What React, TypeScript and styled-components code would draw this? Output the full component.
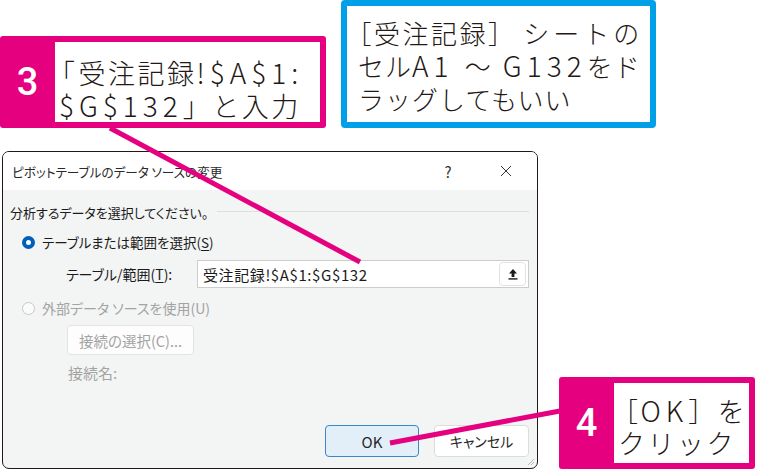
import React from "react";
import styled, { createGlobalStyle } from "styled-components";

const PINK = "#e4007f";
const BLUE = "#00a0e9";
const INK = "#231815";

const GlobalStyle = createGlobalStyle`
  html, body { margin: 0; padding: 0; background: #fff; }
  body {
    width: 783px;
    height: 471px;
    overflow: hidden;
    font-family: "Noto Sans CJK JP", "Noto Sans", sans-serif;
  }
`;

const Stage = styled.div`
  position: relative;
  width: 783px;
  height: 471px;
  display: flex;
  flex-direction: column;
`;

const TopRow = styled.div`
  display: flex;
  align-items: flex-end;
  gap: 15px;
  height: 128px;
`;

const StepCallout = styled.div<{ $w: number; $h: number }>`
  display: flex;
  box-sizing: border-box;
  width: ${(p) => p.$w}px;
  height: ${(p) => p.$h}px;
  background: ${PINK};
  padding: 6px 6px 6px 0;
  border-radius: 3px;
  flex: none;
`;

const StepNumber = styled.div`
  width: 55px;
  flex: none;
  display: flex;
  align-items: center;
  justify-content: center;
  color: #fff;
  font-family: Roboto, "Noto Sans", sans-serif;
  font-weight: 500;
  font-size: 38px;
  line-height: 1;
`;

const CalloutText = styled.div<{ $pt: number; $pl: number }>`
  flex: 1;
  background: #fff;
  color: ${INK};
  font-size: 27px;
  font-weight: 300;
  line-height: 32px;
  padding: ${(p) => p.$pt}px 0 0 ${(p) => p.$pl}px;
  white-space: nowrap;
  letter-spacing: 2.5px;
`;

const NoteCallout = styled.div`
  box-sizing: border-box;
  width: 315px;
  height: 128px;
  border: 6px solid ${BLUE};
  border-radius: 4px;
  background: #fff;
  color: ${INK};
  font-size: 26px;
  font-weight: 300;
  line-height: 33px;
  padding: 10px 0 0 11px;
  white-space: nowrap;
  letter-spacing: 1px;
  flex: none;
`;

const Latin = styled.span<{ $ls?: number }>`
  font-size: 28px;
  letter-spacing: ${(p) => p.$ls ?? 5}px;
`;

const Tracked = styled.span<{ $ls: number }>`
  letter-spacing: ${(p) => p.$ls}px;
`;

/* proportional (half-width) opening bracket */
const OpenBracket = styled.span<{ $shift: number; $after: number }>`
  font-feature-settings: "palt";
  margin-left: ${(p) => p.$shift}px;
  letter-spacing: ${(p) => p.$after}px;
`;

const MainRow = styled.div`
  display: flex;
  align-items: flex-end;
  gap: 21px;
  margin-top: 23px;
  padding-left: 2px;
`;

const Dialog = styled.div`
  position: relative;
  box-sizing: border-box;
  width: 536px;
  height: 318px;
  border: 1px solid ${INK};
  border-radius: 7px;
  overflow: hidden;
  background: #f3f4f4;
  display: flex;
  flex-direction: column;
  color: #1b1b1b;
  font-size: 13.5px;
  font-feature-settings: "palt";
  flex: none;
`;

const TitleBar = styled.div`
  height: 38px;
  flex: none;
  background: #fff;
  display: flex;
  align-items: center;
  padding-left: 9px;
  padding-right: 2px;
`;

const TitleText = styled.div`
  font-size: 12.6px;
  color: #2a2a2a;
`;

const TitleButton = styled.div<{ $first?: boolean }>`
  width: 58px;
  height: 38px;
  display: flex;
  align-items: center;
  justify-content: center;
  color: #333;
  font-size: 15px;
  margin-left: ${(p) => (p.$first ? "auto" : "0")};
`;

const Body = styled.div`
  flex: 1;
  display: flex;
  flex-direction: column;
  padding: 12px 8px 0 7px;
`;

const GroupHeader = styled.div`
  display: flex;
  align-items: center;
  height: 20px;
  font-size: 13px;
`;

const Rule = styled.div`
  flex: 1;
  height: 1px;
  background: #dedede;
  margin-left: 9px;
  margin-top: -2px;
`;

const OptionRow = styled.div<{ $mt: number; $disabled?: boolean }>`
  display: flex;
  align-items: center;
  height: 20px;
  margin-top: ${(p) => p.$mt}px;
  padding-left: 12px;
  gap: 7px;
  color: ${(p) => (p.$disabled ? "#a3a3a3" : "#1b1b1b")};
  font-size: ${(p) => (p.$disabled ? 14 : 13.5)}px;
`;

const Radio = styled.span<{ $checked?: boolean }>`
  box-sizing: border-box;
  width: 13px;
  height: 13px;
  border-radius: 50%;
  flex: none;
  background: ${(p) => (p.$checked ? "#fff" : "#fbfbfb")};
  border: ${(p) => (p.$checked ? "4px solid #005fb8" : "1px solid #c9c9c9")};
`;

const RangeRow = styled.div`
  display: flex;
  align-items: center;
  height: 28px;
  margin-top: 8px;
  padding-left: 56px;
`;

const RangeLabel = styled.div`
  width: 131px;
  flex: none;
  font-size: 14px;
`;

const RangeInput = styled.div`
  box-sizing: border-box;
  width: 333px;
  height: 28px;
  background: #fff;
  border: 1px solid #cdcdcd;
  display: flex;
  align-items: center;
  padding-left: 5px;
  font-size: 15px;
  letter-spacing: 0.6px;
  color: #1b1b1b;
`;

const UploadButton = styled.div`
  box-sizing: border-box;
  margin-left: auto;
  margin-right: 2px;
  width: 27px;
  height: 24px;
  border: 1px solid #e2e2e2;
  border-radius: 4px;
  background: #fff;
  display: flex;
  align-items: center;
  justify-content: center;
`;

const ConnectButton = styled.div`
  box-sizing: border-box;
  width: 127px;
  height: 30px;
  margin-top: 7px;
  margin-left: 57px;
  border: 1px solid #e3e3e3;
  border-radius: 4px;
  background: #fdfdfd;
  color: #a3a3a3;
  font-size: 14.5px;
  display: flex;
  align-items: center;
  justify-content: center;
`;

const ConnectName = styled.div`
  height: 20px;
  line-height: 20px;
  margin-top: 8px;
  margin-left: 58px;
  color: #a3a3a3;
  font-size: 15px;
`;

const Footer = styled.div`
  margin-top: auto;
  display: flex;
  justify-content: flex-end;
  gap: 15px;
  padding-bottom: 11px;
`;

const DialogButton = styled.div<{ $primary?: boolean; $w: number }>`
  box-sizing: border-box;
  width: ${(p) => p.$w}px;
  height: 32px;
  border-radius: 4px;
  border: 1px solid ${(p) => (p.$primary ? "#3b87c9" : "#dcdcdc")};
  background: ${(p) => (p.$primary ? "#e2eef8" : "#fff")};
  color: #262626;
  display: flex;
  align-items: center;
  justify-content: center;
  font-size: ${(p) => (p.$primary ? 15 : 14)}px;
`;

const Grip = styled.svg`
  position: absolute;
  right: 2px;
  bottom: 2px;
`;

const Overlay = styled.svg`
  position: absolute;
  left: 0;
  top: 0;
  pointer-events: none;
`;

const U = styled.span`
  text-decoration: underline;
  text-underline-offset: 2px;
`;

export default function App() {
  return (
    <>
      <GlobalStyle />
      <Stage>
        <TopRow>
          <StepCallout $w={326} $h={92}>
            <StepNumber>3</StepNumber>
            <CalloutText $pt={14} $pl={4}>
              <OpenBracket $shift={2} $after={4}>
                「
              </OpenBracket>
              受注記録<Latin>!$A$1:</Latin>
              <br />
              <Latin>$G$132</Latin>」と入力
            </CalloutText>
          </StepCallout>
          <NoteCallout>
            <OpenBracket $shift={0} $after={3}>
              ［
            </OpenBracket>
            <Tracked $ls={2.5}>受注記録］</Tracked> <Tracked $ls={4}>シートの</Tracked>
            <br />
            セル<Latin>A1 </Latin>～<Latin> G132</Latin>をド
            <br />
            ラッグしてもいい
          </NoteCallout>
        </TopRow>
        <MainRow>
          <Dialog>
            <TitleBar>
              <TitleText>ピボットテーブルのデータ ソースの変更</TitleText>
              <TitleButton $first>?</TitleButton>
              <TitleButton>
                <svg width="12" height="12" viewBox="0 0 12 12">
                  <path d="M1 1L11 11M11 1L1 11" stroke="#333" strokeWidth="1" fill="none" />
                </svg>
              </TitleButton>
            </TitleBar>
            <Body>
              <GroupHeader>
                分析するデータを選択してください。
                <Rule />
              </GroupHeader>
              <OptionRow $mt={10}>
                <Radio $checked />
                <span>
                  テーブルまたは範囲を選択(<U>S</U>)
                </span>
              </OptionRow>
              <RangeRow>
                <RangeLabel>
                  テーブル/範囲(<U>T</U>):
                </RangeLabel>
                <RangeInput>
                  受注記録!$A$1:$G$132
                  <UploadButton>
                    <svg width="10" height="12" viewBox="0 0 10 12">
                      <path d="M5 1L1 5.5H3.6V9H6.4V5.5H9Z" fill="#1b1b1b" />
                      <rect x="0.5" y="10.2" width="9" height="1.4" fill="#1b1b1b" />
                    </svg>
                  </UploadButton>
                </RangeInput>
              </RangeRow>
              <OptionRow $mt={10} $disabled>
                <Radio />
                <span>外部データ ソースを使用(U)</span>
              </OptionRow>
              <ConnectButton>接続の選択(C)...</ConnectButton>
              <ConnectName>接続名:</ConnectName>
              <Footer>
                <DialogButton $primary $w={94}>
                  OK
                </DialogButton>
                <DialogButton $w={95}>キャンセル</DialogButton>
              </Footer>
            </Body>
            <Grip width="8" height="8" viewBox="0 0 8 8">
              <path d="M7 1L1 7M7 4L4 7" stroke="#b5b5b5" strokeWidth="1" />
            </Grip>
          </Dialog>
          <StepCallout $w={196} $h={92}>
            <StepNumber>4</StepNumber>
            <CalloutText $pt={11} $pl={4}>
              <OpenBracket $shift={6} $after={3}>
                ［
              </OpenBracket>
              <Latin $ls={5}>OK</Latin>］を
              <br />
              クリック
            </CalloutText>
          </StepCallout>
        </MainRow>
        <Overlay width="783" height="471" viewBox="0 0 783 471">
          <line x1="110" y1="128" x2="360" y2="262" stroke={PINK} strokeWidth="5" />
          <line x1="560" y1="411" x2="390" y2="443" stroke={PINK} strokeWidth="5" />
        </Overlay>
      </Stage>
    </>
  );
}
